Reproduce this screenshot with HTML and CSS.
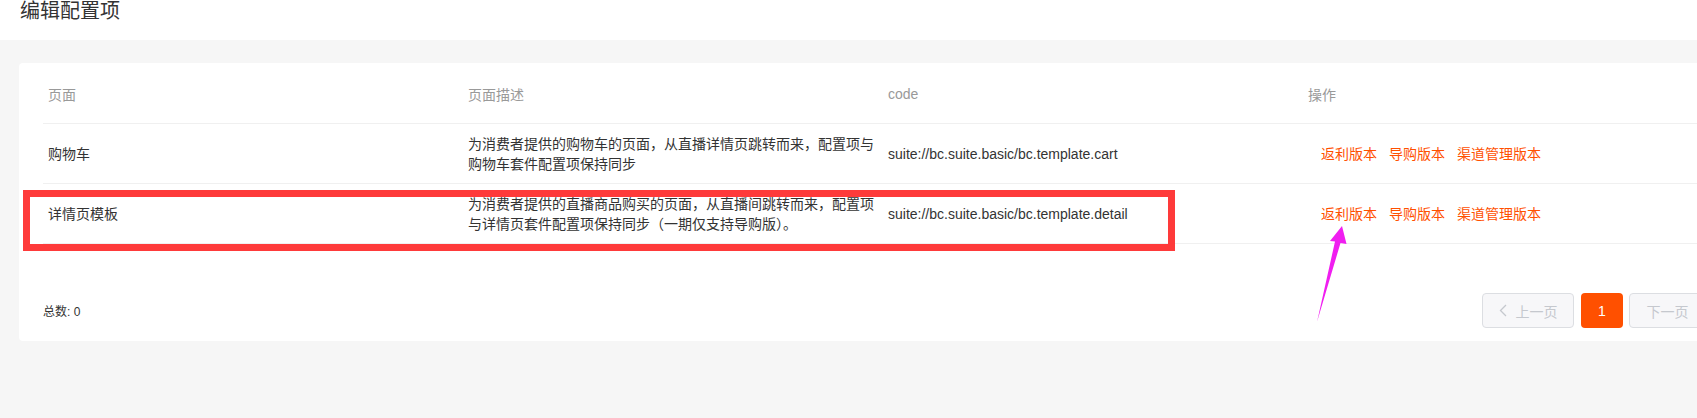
FILE: index.html
```html
<!DOCTYPE html>
<html lang="zh-CN">
<head>
    <meta charset="UTF-8">
    <meta name="viewport" content="width=device-width, initial-scale=1.0">
    <title>编辑配置项</title>
    <link rel="stylesheet" href="styles.css">
</head>
<body>
    <div class="page-header">
        <h1>编辑配置项</h1>
    </div>
    <div class="content">
        <div class="card">
            <table class="config-table">
                <colgroup>
                    <col class="col">
                    <col class="col">
                    <col class="col">
                    <col class="col">
                </colgroup>
                <thead>
                    <tr>
                        <th>页面</th>
                        <th>页面描述</th>
                        <th>code</th>
                        <th>操作</th>
                    </tr>
                </thead>
                <tbody>
                    <tr>
                        <td>购物车</td>
                        <td class="desc">为消费者提供的购物车的页面，从直播详情页跳转而来，配置项与购物车套件配置项保持同步</td>
                        <td>suite://bc.suite.basic/bc.template.cart</td>
                        <td>
                            <div class="actions">
                                <a class="link">返利版本</a>
                                <a class="link">导购版本</a>
                                <a class="link">渠道管理版本</a>
                            </div>
                        </td>
                    </tr>
                    <tr>
                        <td>详情页模板</td>
                        <td class="desc">为消费者提供的直播商品购买的页面，从直播间跳转而来，配置项与详情页套件配置项保持同步（一期仅支持导购版）。</td>
                        <td>suite://bc.suite.basic/bc.template.detail</td>
                        <td>
                            <div class="actions">
                                <a class="link">返利版本</a>
                                <a class="link">导购版本</a>
                                <a class="link">渠道管理版本</a>
                            </div>
                        </td>
                    </tr>
                </tbody>
            </table>
            <div class="table-footer">
                <span class="total">总数: 0</span>
                <div class="pager">
                    <button class="page-btn nav prev" disabled>
                        <svg width="8" height="13" viewBox="0 0 8 13"><polyline points="7,1 1.5,6.5 7,12" fill="none" stroke="#c5c8ce" stroke-width="1.3"/></svg>
                        上一页
                    </button>
                    <button class="page-btn active">1</button>
                    <button class="page-btn nav next" disabled>
                        下一页
                        <svg width="8" height="13" viewBox="0 0 8 13"><polyline points="1,1 6.5,6.5 1,12" fill="none" stroke="#c5c8ce" stroke-width="1.3"/></svg>
                    </button>
                </div>
            </div>
        </div>
    </div>

    <!-- 标注：红框和箭头 -->
    <svg class="annotations" width="1697" height="418" viewBox="0 0 1697 418">
        <rect x="26.5" y="193.5" width="1145" height="54" fill="none" stroke="#fe3a3a" stroke-width="7"/>
        <polygon points="1342,226 1330,241 1335,241.5 1317,322 1340.5,243 1346.5,244" fill="#f01ef0"/>
    </svg>
</body>
</html>
```

FILE: styles.css
```css
body {
    margin: 0;
    background-color: #f6f6f6;
    font-family: "Liberation Sans", Arial, "Noto Sans CJK SC", sans-serif;
    color: #333;
    overflow: hidden;
    position: relative;
    height: 418px;
}
.page-header {
    background-color: #fff;
    height: 40px;
    padding: 0 20px;
}
.page-header h1 {
    margin: 0;
    font-size: 20px;
    font-weight: normal;
    line-height: 22px;
}
.content {
    padding: 23px 0 0 19px;
}
.card {
    background-color: #fff;
    border-radius: 4px;
    width: 1680px;
    padding: 2px 24px 13px;
}
.config-table {
    width: 1680px;
    table-layout: fixed;
    border-collapse: collapse;
    font-size: 14px;
}
.config-table .col {
    width: 420px;
}
.config-table th {
    height: 58px;
    padding: 0 5px;
    text-align: left;
    font-weight: normal;
    color: #999;
    border-bottom: 1px solid #f0f0f0;
}
.config-table td {
    height: 59px;
    padding: 0 5px;
    line-height: 20px;
    border-bottom: 1px solid #f0f0f0;
}
.actions {
    display: flex;
    padding-left: 7px;
}
.link {
    color: #ff5000;
    padding: 0 6px;
    cursor: pointer;
}
.table-footer {
    display: flex;
    justify-content: space-between;
    align-items: center;
    margin-top: 49px;
    height: 35px;
}
.total {
    font-size: 12px;
}
.pager {
    display: flex;
}
.page-btn {
    height: 35px;
    border-radius: 4px;
    font-family: inherit;
    font-size: 14px;
    padding: 0;
    display: flex;
    align-items: center;
    justify-content: center;
    gap: 9px;
}
.page-btn.nav {
    border: 1px solid #dcdee2;
    background-color: #f7f7f9;
    color: #c5c8ce;
}
.page-btn.prev {
    width: 92px;
}
.page-btn.next {
    width: 94px;
}
.page-btn.active {
    width: 42px;
    margin: 0 6px 0 7px;
    border: none;
    background-color: #ff5000;
    color: #fff;
}
.annotations {
    position: absolute;
    left: 0;
    top: 0;
    pointer-events: none;
}
```
